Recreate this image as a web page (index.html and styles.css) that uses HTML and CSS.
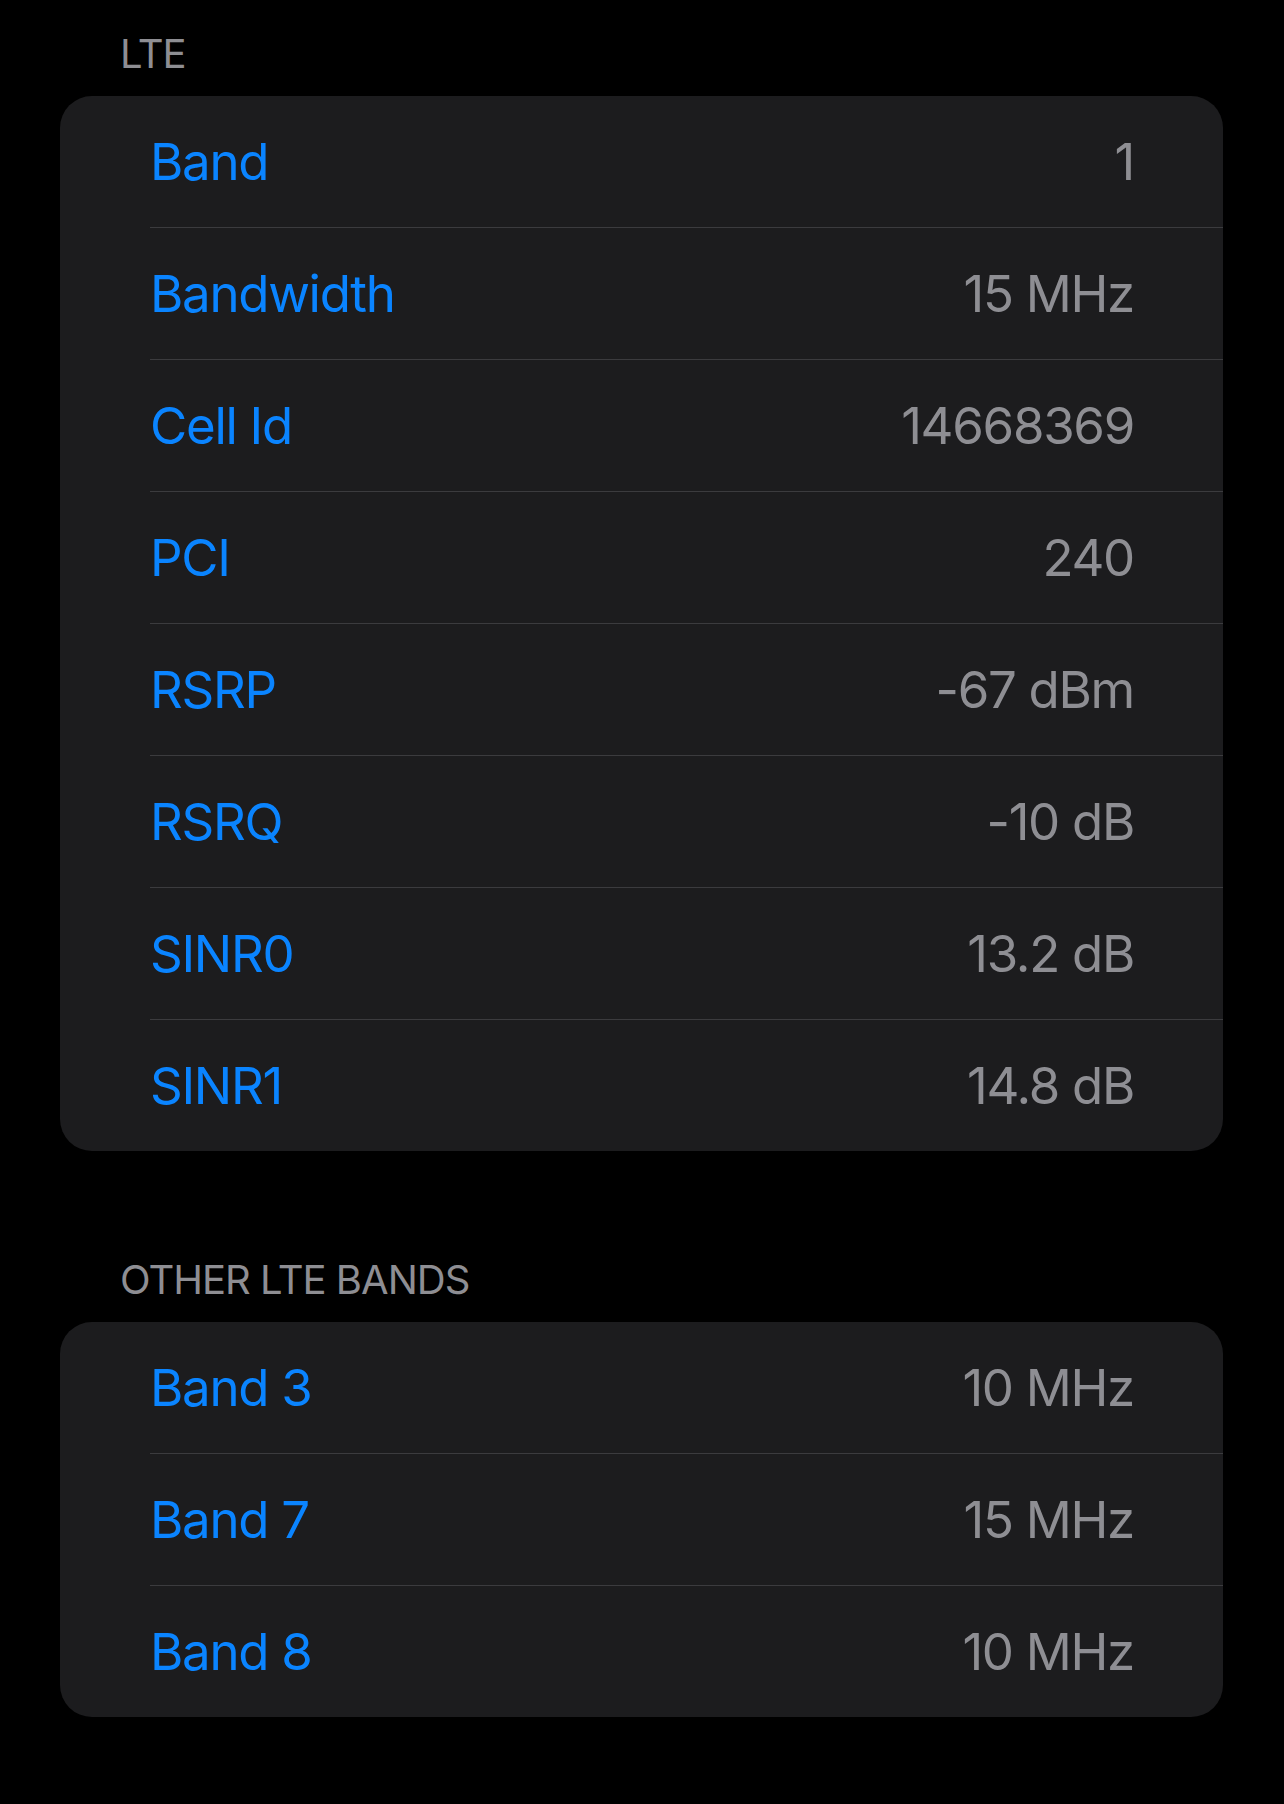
FILE: index.html
```html
<!DOCTYPE html>
<html lang="en">
<head>
<meta charset="utf-8">
<title>LTE</title>
<link rel="stylesheet" href="styles.css">
</head>
<body>
<main class="page">
  <section class="group">
    <h2 class="group-title">LTE</h2>
    <div class="card">
      <div class="row"><span class="label">Band</span><span class="value">1</span></div>
      <div class="row"><span class="label">Bandwidth</span><span class="value">15 MHz</span></div>
      <div class="row"><span class="label">Cell Id</span><span class="value">14668369</span></div>
      <div class="row"><span class="label">PCI</span><span class="value">240</span></div>
      <div class="row"><span class="label">RSRP</span><span class="value">-67 dBm</span></div>
      <div class="row"><span class="label">RSRQ</span><span class="value">-10 dB</span></div>
      <div class="row"><span class="label">SINR0</span><span class="value">13.2 dB</span></div>
      <div class="row"><span class="label">SINR1</span><span class="value">14.8 dB</span></div>
    </div>
  </section>
  <section class="group group-second">
    <h2 class="group-title">OTHER LTE BANDS</h2>
    <div class="card">
      <div class="row"><span class="label">Band 3</span><span class="value">10 MHz</span></div>
      <div class="row"><span class="label">Band 7</span><span class="value">15 MHz</span></div>
      <div class="row"><span class="label">Band 8</span><span class="value">10 MHz</span></div>
    </div>
  </section>
</main>
</body>
</html>
```
FILE: styles.css
```css
html, body {
  margin: 0;
  padding: 0;
  background: #000;
}
body {
  width: 1284px;
  min-height: 1804px;
  font-family: Inter, "Noto Sans", "Liberation Sans", sans-serif;
  -webkit-font-smoothing: antialiased;
}
.page {
  padding: 30px 61px 0 60px;
}
.group-title {
  margin: 0 0 18px 60px;
  font-size: 40px;
  line-height: 48px;
  font-weight: 400;
  color: #8e8e93;
  letter-spacing: -1px;
}
.group-second {
  margin-top: 105px;
}
.card {
  background: #1c1c1e;
  border-radius: 32px;
  overflow: hidden;
}
.row {
  height: 131px;
  display: flex;
  align-items: center;
  justify-content: space-between;
  padding: 0 89px 0 90px;
  font-size: 51px;
  letter-spacing: -1.3px;
}
.row + .row {
  border-top: 1px solid #3b3b3e;
  margin-left: 90px;
  padding-left: 0;
}
.label {
  color: #0a84ff;
}
.value {
  color: #8e8e93;
}
```
